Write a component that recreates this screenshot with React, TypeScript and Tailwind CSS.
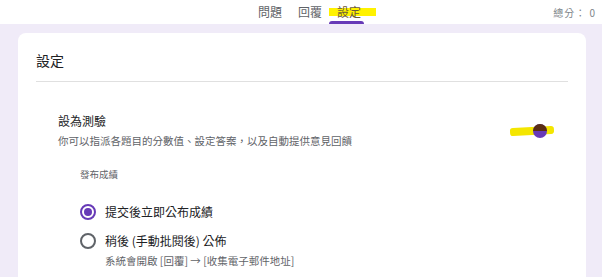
const font = "font-['Noto_Sans_CJK_TC','Noto_Sans',sans-serif]";

function Radio({ checked }: { checked: boolean }) {
  return (
    <span
      className={`flex h-[16px] w-[16px] items-center justify-center rounded-full border-2 ${
        checked ? "border-[#673ab7]" : "border-[#5f6368]"
      }`}
    >
      {checked && <span className="h-[8px] w-[8px] rounded-full bg-[#673ab7]" />}
    </span>
  );
}

export default function App() {
  return (
    <div className={`h-[277px] w-[602px] overflow-hidden bg-[#f0ebf8] ${font}`}>
      <div className="relative flex h-[24px] items-center bg-white pl-[258px] text-[12px] text-[#5f6368]">
        <span className="mr-[16px] leading-[24px]">問題</span>
        <span className="mr-[7px] leading-[24px]">回覆</span>
        <span className="relative flex h-full items-center px-[8px]">
          <span className="absolute left-0 top-[8px] h-[8px] w-[47px] bg-[#fff200]" />
          <span className="relative leading-[24px] text-[#6b5a3a]">設定</span>
          <span className="absolute bottom-0 left-0 h-[3px] w-[35px] rounded-t-[3px] bg-[#673ab7]" />
        </span>
        <span className="absolute right-[6px] top-[5px] text-[10px] tracking-[1px] text-[#80868b]">總分： 0</span>
      </div>

      <div className="ml-[18px] mr-[16px] mt-[9px] rounded-t-[8px] bg-white px-[18px] pt-[16px] pb-[20px]">
        <div className="border-b border-[#e0e0e0] pb-[10px] text-[14px] leading-[22px] text-[#202124]">設定</div>

        <div className="flex items-center justify-between pl-[22px] pr-[12px] pt-[29px]">
          <div>
            <div className="text-[12px] leading-[19px] text-[#202124]">設為測驗</div>
            <div className="mt-[2px] text-[10.5px] leading-[18px] text-[#5f6368]">
              你可以指派各題目的分數值、設定答案，以及自動提供意見回饋
            </div>
          </div>
          <div className="relative mt-[2px] h-[14px] w-[46px]">
            <span className="absolute left-0 top-[2px] h-[8px] w-[44px] -rotate-3 rounded-[3px] bg-[#f4e600]" />
            <span className="absolute left-[23px] top-[-1px] h-[14px] w-[14px] overflow-hidden rounded-full bg-[#673ab7]">
              <span className="absolute left-0 top-0 h-[7px] w-full bg-[#5a2e14]" />
            </span>
          </div>
        </div>

        <div className="pl-[44px] pt-[16px]">
          <div className="text-[9.5px] leading-[16px] text-[#5f6368]">發布成績</div>
          <div className="mt-[20px] flex items-center gap-[9px]">
            <Radio checked />
            <span className="text-[12px] leading-[20px] text-[#202124]">提交後立即公布成績</span>
          </div>
          <div className="mt-[9px] flex items-start gap-[9px]">
            <span className="mt-[2px]">
              <Radio checked={false} />
            </span>
            <div>
              <div className="text-[12px] leading-[20px] text-[#202124]">稍後 (手動批閱後) 公佈</div>
              <div className="mt-[2px] text-[10.5px] leading-[16px] text-[#5f6368]">系統會開啟 [回覆] → [收集電子郵件地址]</div>
            </div>
          </div>
        </div>
      </div>
    </div>
  );
}
